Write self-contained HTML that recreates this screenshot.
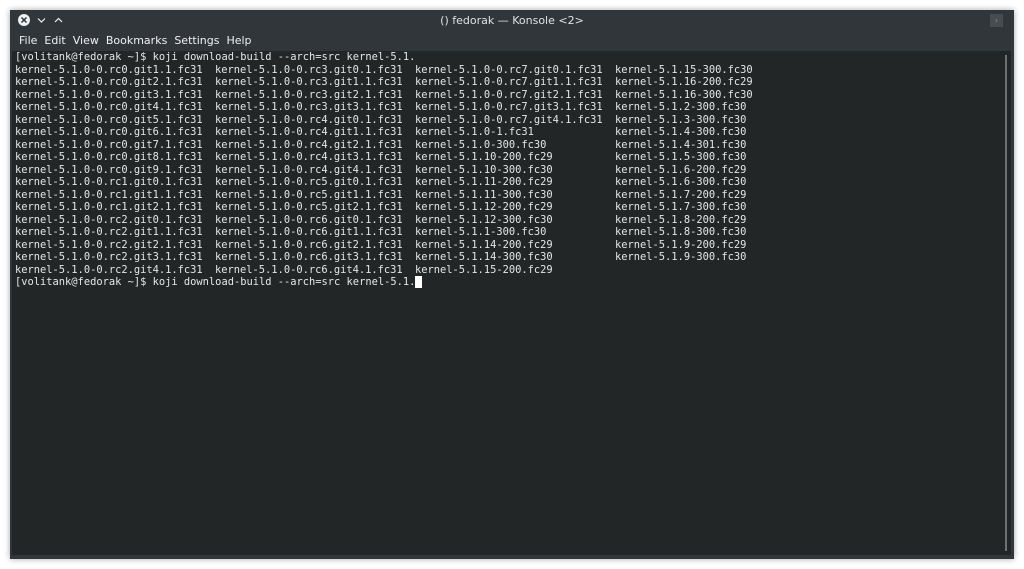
<!DOCTYPE html>
<html><head><meta charset="utf-8"><style>
*{margin:0;padding:0;box-sizing:border-box}
body{width:1024px;height:569px;background:#fff;position:relative;overflow:hidden;font-family:"DejaVu Sans","Liberation Sans",sans-serif}
#win{position:absolute;left:10px;top:10px;width:1004px;height:549px;background:#31363b;box-shadow:0 0 6px rgba(0,0,0,.35)}
#title{position:absolute;left:0;top:0;width:100%;height:21px;text-align:center;color:#dfe1e3;font-size:11px;line-height:21px}
#menu{position:absolute;left:9px;top:24px;color:#eff0f1;font-size:11px;word-spacing:2px}
#menu span{margin-right:7px}
#term{position:absolute;left:2px;top:41px;width:999px;height:504px;background:#232627}
.t{position:absolute;left:3px;top:0;width:980px;font-family:"DejaVu Sans Mono","Liberation Mono",monospace;font-size:10.4px;line-height:12.5px;color:#e4e6e7}
.t div{height:12.5px;white-space:pre}
.t i{font-style:normal;display:inline-block;width:200px}
#sb{position:absolute;left:993px;top:4px;width:2px;height:496px;background:#6b7074}
.cur{background:#fff;color:#232627}
#btn{position:absolute;left:980px;top:4px;width:13px;height:13px;background:#474c51;color:#8b9095;font-size:8px;text-align:center;line-height:13px}
</style></head><body>
<div id="win">
<div id="title">() fedorak — Konsole &lt;2&gt;</div>
<svg style="position:absolute;left:7px;top:3px" width="60" height="15">
<circle cx="7" cy="7" r="6" fill="#eff0f1"/>
<path d="M4.5 4.5L9.5 9.5M9.5 4.5L4.5 9.5" stroke="#31363b" stroke-width="1.5"/>
<path d="M21 5.5L24.5 9L28 5.5" stroke="#eff0f1" fill="none" stroke-width="1.2"/>
<path d="M38 9L41.5 5.5L45 9" stroke="#eff0f1" fill="none" stroke-width="1.2"/>
</svg>
<div id="btn">›</div>
<div id="menu"><span>File</span><span>Edit</span><span>View</span><span>Bookmarks</span><span>Settings</span><span>Help</span></div>
<div id="term"><div id="sb"></div>
<div class="t"><div>[volitank@fedorak ~]$ koji download-build --arch=src kernel-5.1.</div><div><i>kernel-5.1.0-0.rc0.git1.1.fc31</i><i>kernel-5.1.0-0.rc3.git0.1.fc31</i><i>kernel-5.1.0-0.rc7.git0.1.fc31</i><i>kernel-5.1.15-300.fc30</i></div><div><i>kernel-5.1.0-0.rc0.git2.1.fc31</i><i>kernel-5.1.0-0.rc3.git1.1.fc31</i><i>kernel-5.1.0-0.rc7.git1.1.fc31</i><i>kernel-5.1.16-200.fc29</i></div><div><i>kernel-5.1.0-0.rc0.git3.1.fc31</i><i>kernel-5.1.0-0.rc3.git2.1.fc31</i><i>kernel-5.1.0-0.rc7.git2.1.fc31</i><i>kernel-5.1.16-300.fc30</i></div><div><i>kernel-5.1.0-0.rc0.git4.1.fc31</i><i>kernel-5.1.0-0.rc3.git3.1.fc31</i><i>kernel-5.1.0-0.rc7.git3.1.fc31</i><i>kernel-5.1.2-300.fc30</i></div><div><i>kernel-5.1.0-0.rc0.git5.1.fc31</i><i>kernel-5.1.0-0.rc4.git0.1.fc31</i><i>kernel-5.1.0-0.rc7.git4.1.fc31</i><i>kernel-5.1.3-300.fc30</i></div><div><i>kernel-5.1.0-0.rc0.git6.1.fc31</i><i>kernel-5.1.0-0.rc4.git1.1.fc31</i><i>kernel-5.1.0-1.fc31</i><i>kernel-5.1.4-300.fc30</i></div><div><i>kernel-5.1.0-0.rc0.git7.1.fc31</i><i>kernel-5.1.0-0.rc4.git2.1.fc31</i><i>kernel-5.1.0-300.fc30</i><i>kernel-5.1.4-301.fc30</i></div><div><i>kernel-5.1.0-0.rc0.git8.1.fc31</i><i>kernel-5.1.0-0.rc4.git3.1.fc31</i><i>kernel-5.1.10-200.fc29</i><i>kernel-5.1.5-300.fc30</i></div><div><i>kernel-5.1.0-0.rc0.git9.1.fc31</i><i>kernel-5.1.0-0.rc4.git4.1.fc31</i><i>kernel-5.1.10-300.fc30</i><i>kernel-5.1.6-200.fc29</i></div><div><i>kernel-5.1.0-0.rc1.git0.1.fc31</i><i>kernel-5.1.0-0.rc5.git0.1.fc31</i><i>kernel-5.1.11-200.fc29</i><i>kernel-5.1.6-300.fc30</i></div><div><i>kernel-5.1.0-0.rc1.git1.1.fc31</i><i>kernel-5.1.0-0.rc5.git1.1.fc31</i><i>kernel-5.1.11-300.fc30</i><i>kernel-5.1.7-200.fc29</i></div><div><i>kernel-5.1.0-0.rc1.git2.1.fc31</i><i>kernel-5.1.0-0.rc5.git2.1.fc31</i><i>kernel-5.1.12-200.fc29</i><i>kernel-5.1.7-300.fc30</i></div><div><i>kernel-5.1.0-0.rc2.git0.1.fc31</i><i>kernel-5.1.0-0.rc6.git0.1.fc31</i><i>kernel-5.1.12-300.fc30</i><i>kernel-5.1.8-200.fc29</i></div><div><i>kernel-5.1.0-0.rc2.git1.1.fc31</i><i>kernel-5.1.0-0.rc6.git1.1.fc31</i><i>kernel-5.1.1-300.fc30</i><i>kernel-5.1.8-300.fc30</i></div><div><i>kernel-5.1.0-0.rc2.git2.1.fc31</i><i>kernel-5.1.0-0.rc6.git2.1.fc31</i><i>kernel-5.1.14-200.fc29</i><i>kernel-5.1.9-200.fc29</i></div><div><i>kernel-5.1.0-0.rc2.git3.1.fc31</i><i>kernel-5.1.0-0.rc6.git3.1.fc31</i><i>kernel-5.1.14-300.fc30</i><i>kernel-5.1.9-300.fc30</i></div><div><i>kernel-5.1.0-0.rc2.git4.1.fc31</i><i>kernel-5.1.0-0.rc6.git4.1.fc31</i><i>kernel-5.1.15-200.fc29</i></div><div>[volitank@fedorak ~]$ koji download-build --arch=src kernel-5.1.<span class="cur"> </span></div></div>
</div>
</div>
</body></html>
